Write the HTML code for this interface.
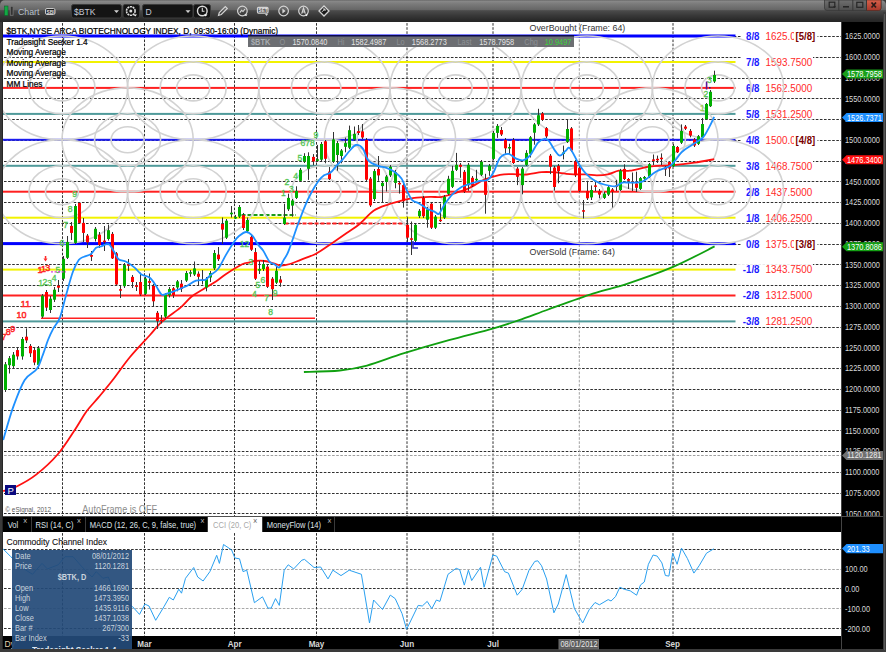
<!DOCTYPE html>
<html><head><meta charset="utf-8"><title>Chart</title>
<style>
html,body{margin:0;padding:0;}
body{width:886px;height:652px;overflow:hidden;position:relative;background:#3a3a3a;font-family:"Liberation Sans", sans-serif;}
.abs{position:absolute;}
#tb{left:0;top:0;width:886px;height:22px;background:linear-gradient(#6a6a6a 0px,#878787 1.5px,#7a7a7a 4px,#656565 10px,#4b4b4b 10.6px,#3a3a3a 15px,#2b2b2b 19.5px,#262626 22px);border-radius:5px 5px 0 0;}
svg{position:absolute;left:0;top:0;}
.tab{position:absolute;top:517.8px;height:15px;font-size:7.6px;line-height:15px;color:#d8dde2;white-space:nowrap;transform:scaleY(1.15);transform-origin:0 50%;}
.dw{position:absolute;left:12px;top:550px;width:120px;height:99px;background:rgba(36,74,120,0.93);overflow:hidden;}
.dw div{position:absolute;font-size:7.4px;color:#c9d3dd;white-space:nowrap;line-height:10px;transform:scaleY(1.15);}
</style></head><body>
<div id="tb" class="abs"></div>

<svg width="886" height="652" viewBox="0 0 886 652" font-family='"Liberation Sans", sans-serif'>
<rect x="3" y="22" width="838" height="494" fill="#ffffff"/>
<rect x="841" y="22" width="42" height="494" fill="#000000"/>
<rect x="3" y="516" width="880" height="16" fill="#000000"/>
<rect x="3" y="532" width="838" height="104" fill="#ffffff"/>
<rect x="841" y="532" width="42" height="104" fill="#000000"/>
<rect x="3" y="636" width="880" height="13" fill="#000000"/>
<rect x="2" y="22" width="1" height="627" fill="#262626"/>
<rect x="841" y="22" width="1" height="627" fill="#444"/>
<defs><clipPath id="cm"><rect x="3" y="22" width="838" height="494"/></clipPath><clipPath id="cc"><rect x="3" y="532" width="838" height="104"/></clipPath></defs>
<g clip-path="url(#cm)">
<path d="M3 36.5 H841 M3 57.5 H841 M3 78.5 H841 M3 98.5 H841 M3 119.5 H841 M3 140.5 H841 M3 161.5 H841 M3 181.5 H841 M3 202.5 H841 M3 223.5 H841 M3 244.5 H841 M3 264.5 H841 M3 285.5 H841 M3 306.5 H841 M3 327.5 H841 M3 347.5 H841 M3 368.5 H841 M3 389.5 H841 M3 410.5 H841 M3 430.5 H841 M3 451.5 H841 M3 472.5 H841 M3 493.5 H841 M3 513.5 H841" stroke="#303030" stroke-width="1" stroke-dasharray="2.6 1.5" stroke-dashoffset="3.1" fill="none"/>
<path d="M62.5 22 V516 M144.5 22 V516 M234.5 22 V516 M316.5 22 V516 M407 22 V516 M493 22 V516 M673 22 V516" stroke="#303030" stroke-width="1" stroke-dasharray="2.6 1.5" stroke-dashoffset="3.0" fill="none"/>
<path d="M579.3 22 V516 M3 455.5 H841" stroke="#a0a0a0" stroke-width="1" stroke-dasharray="2.6 1.5" stroke-dashoffset="3.0" fill="none"/>
<rect x="3" y="34.5" width="732.5" height="3" fill="#0000ff"/>
<rect x="3" y="61" width="732.5" height="2" fill="#f2f200"/>
<rect x="3" y="86.9" width="732.5" height="2" fill="#ff2020"/>
<rect x="3" y="112.9" width="732.5" height="2" fill="#4f9a9a"/>
<rect x="3" y="138.8" width="732.5" height="2" fill="#1c1cf0"/>
<rect x="3" y="164.8" width="732.5" height="2" fill="#4f9a9a"/>
<rect x="3" y="190.7" width="732.5" height="2" fill="#ff2020"/>
<rect x="3" y="216.7" width="732.5" height="2" fill="#f2f200"/>
<rect x="3" y="242.1" width="732.5" height="3" fill="#0000ff"/>
<rect x="3" y="268.6" width="732.5" height="2" fill="#f2f200"/>
<rect x="3" y="294.5" width="732.5" height="2" fill="#ff2020"/>
<rect x="3" y="320.4" width="732.5" height="2" fill="#4f9a9a"/>
<rect x="41" y="317.5" width="274" height="1.5" fill="#ff2020"/>
<path d="M241.5 215 H296" stroke="#1a9a1a" stroke-width="2" stroke-dasharray="4 2"/>
<path d="M284.5 223.5 H405" stroke="#ff2020" stroke-width="2" stroke-dasharray="4 2"/>
<rect x="741" y="30.5" width="72" height="11" fill="#fff"/>
<text transform="matrix(1 0 0 1.12 759.5 39.9)" font-size="9.7" fill="#1a1aff" text-anchor="end" font-weight="bold">8/8</text>
<text transform="matrix(1 0 0 1.1 765.5 39.9)" font-size="9.9" fill="#ff2a2a">1625.0</text>
<rect x="794" y="30.5" width="23.5" height="11" fill="#fff"/>
<text transform="matrix(1 0 0 1.12 795.5 39.9)" font-size="9.6" fill="#7a0000" font-weight="bold">[5/8]</text>
<rect x="741" y="56.5" width="72" height="11" fill="#fff"/>
<text transform="matrix(1 0 0 1.12 759.5 65.9)" font-size="9.7" fill="#1a1aff" text-anchor="end" font-weight="bold">7/8</text>
<text transform="matrix(1 0 0 1.1 765.5 65.9)" font-size="9.9" fill="#ff2a2a">1593.7500</text>
<rect x="741" y="82.4" width="72" height="11" fill="#fff"/>
<text transform="matrix(1 0 0 1.12 759.5 91.8)" font-size="9.7" fill="#1a1aff" text-anchor="end" font-weight="bold">6/8</text>
<text transform="matrix(1 0 0 1.1 765.5 91.8)" font-size="9.9" fill="#ff2a2a">1562.5000</text>
<rect x="741" y="108.4" width="72" height="11" fill="#fff"/>
<text transform="matrix(1 0 0 1.12 759.5 117.8)" font-size="9.7" fill="#1a1aff" text-anchor="end" font-weight="bold">5/8</text>
<text transform="matrix(1 0 0 1.1 765.5 117.8)" font-size="9.9" fill="#ff2a2a">1531.2500</text>
<rect x="741" y="134.3" width="72" height="11" fill="#fff"/>
<text transform="matrix(1 0 0 1.12 759.5 143.7)" font-size="9.7" fill="#1a1aff" text-anchor="end" font-weight="bold">4/8</text>
<text transform="matrix(1 0 0 1.1 765.5 143.7)" font-size="9.9" fill="#ff2a2a">1500.0</text>
<rect x="794" y="134.3" width="23.5" height="11" fill="#fff"/>
<text transform="matrix(1 0 0 1.12 795.5 143.7)" font-size="9.6" fill="#7a0000" font-weight="bold">[4/8]</text>
<rect x="741" y="160.2" width="72" height="11" fill="#fff"/>
<text transform="matrix(1 0 0 1.12 759.5 169.7)" font-size="9.7" fill="#1a1aff" text-anchor="end" font-weight="bold">3/8</text>
<text transform="matrix(1 0 0 1.1 765.5 169.7)" font-size="9.9" fill="#ff2a2a">1468.7500</text>
<rect x="741" y="186.2" width="72" height="11" fill="#fff"/>
<text transform="matrix(1 0 0 1.12 759.5 195.6)" font-size="9.7" fill="#1a1aff" text-anchor="end" font-weight="bold">2/8</text>
<text transform="matrix(1 0 0 1.1 765.5 195.6)" font-size="9.9" fill="#ff2a2a">1437.5000</text>
<rect x="741" y="212.2" width="72" height="11" fill="#fff"/>
<text transform="matrix(1 0 0 1.12 759.5 221.6)" font-size="9.7" fill="#1a1aff" text-anchor="end" font-weight="bold">1/8</text>
<text transform="matrix(1 0 0 1.1 765.5 221.6)" font-size="9.9" fill="#ff2a2a">1406.2500</text>
<rect x="741" y="238.1" width="72" height="11" fill="#fff"/>
<text transform="matrix(1 0 0 1.12 759.5 247.5)" font-size="9.7" fill="#1a1aff" text-anchor="end" font-weight="bold">0/8</text>
<text transform="matrix(1 0 0 1.1 765.5 247.5)" font-size="9.9" fill="#ff2a2a">1375.0</text>
<rect x="794" y="238.1" width="23.5" height="11" fill="#fff"/>
<text transform="matrix(1 0 0 1.12 795.5 247.5)" font-size="9.6" fill="#7a0000" font-weight="bold">[3/8]</text>
<rect x="737" y="264.1" width="76" height="11" fill="#fff"/>
<text transform="matrix(1 0 0 1.12 759.5 273.4)" font-size="9.7" fill="#1a1aff" text-anchor="end" font-weight="bold">-1/8</text>
<text transform="matrix(1 0 0 1.1 765.5 273.4)" font-size="9.9" fill="#ff2a2a">1343.7500</text>
<rect x="737" y="290" width="76" height="11" fill="#fff"/>
<text transform="matrix(1 0 0 1.12 759.5 299.4)" font-size="9.7" fill="#1a1aff" text-anchor="end" font-weight="bold">-2/8</text>
<text transform="matrix(1 0 0 1.1 765.5 299.4)" font-size="9.9" fill="#ff2a2a">1312.5000</text>
<rect x="737" y="315.9" width="76" height="11" fill="#fff"/>
<text transform="matrix(1 0 0 1.12 759.5 325.3)" font-size="9.7" fill="#1a1aff" text-anchor="end" font-weight="bold">-3/8</text>
<text transform="matrix(1 0 0 1.1 765.5 325.3)" font-size="9.9" fill="#ff2a2a">1281.2500</text>
<g fill="none" stroke="#d2d2d2" stroke-width="1.6"><ellipse cx="-69.2" cy="87.9" rx="16.5" ry="13"/><ellipse cx="-69.2" cy="87.9" rx="33" ry="26"/><ellipse cx="-69.2" cy="87.9" rx="65.6" ry="51.9"/><ellipse cx="-69.2" cy="191.7" rx="16.5" ry="13"/><ellipse cx="-69.2" cy="191.7" rx="33" ry="26"/><ellipse cx="-69.2" cy="191.7" rx="65.6" ry="51.9"/><ellipse cx="62" cy="87.9" rx="16.5" ry="13"/><ellipse cx="62" cy="87.9" rx="33" ry="26"/><ellipse cx="62" cy="87.9" rx="65.6" ry="51.9"/><ellipse cx="62" cy="191.7" rx="16.5" ry="13"/><ellipse cx="62" cy="191.7" rx="33" ry="26"/><ellipse cx="62" cy="191.7" rx="65.6" ry="51.9"/><ellipse cx="127.6" cy="139.8" rx="16.5" ry="13"/><ellipse cx="127.6" cy="139.8" rx="33" ry="26"/><ellipse cx="127.6" cy="139.8" rx="65.6" ry="51.9"/><ellipse cx="193.2" cy="87.9" rx="16.5" ry="13"/><ellipse cx="193.2" cy="87.9" rx="33" ry="26"/><ellipse cx="193.2" cy="87.9" rx="65.6" ry="51.9"/><ellipse cx="193.2" cy="191.7" rx="16.5" ry="13"/><ellipse cx="193.2" cy="191.7" rx="33" ry="26"/><ellipse cx="193.2" cy="191.7" rx="65.6" ry="51.9"/><ellipse cx="390" cy="139.8" rx="16.5" ry="13"/><ellipse cx="390" cy="139.8" rx="33" ry="26"/><ellipse cx="390" cy="139.8" rx="65.6" ry="51.9"/><ellipse cx="324.4" cy="87.9" rx="16.5" ry="13"/><ellipse cx="324.4" cy="87.9" rx="33" ry="26"/><ellipse cx="324.4" cy="87.9" rx="65.6" ry="51.9"/><ellipse cx="324.4" cy="191.7" rx="16.5" ry="13"/><ellipse cx="324.4" cy="191.7" rx="33" ry="26"/><ellipse cx="324.4" cy="191.7" rx="65.6" ry="51.9"/><ellipse cx="652.4" cy="139.8" rx="16.5" ry="13"/><ellipse cx="652.4" cy="139.8" rx="33" ry="26"/><ellipse cx="652.4" cy="139.8" rx="65.6" ry="51.9"/><ellipse cx="455.6" cy="87.9" rx="16.5" ry="13"/><ellipse cx="455.6" cy="87.9" rx="33" ry="26"/><ellipse cx="455.6" cy="87.9" rx="65.6" ry="51.9"/><ellipse cx="455.6" cy="191.7" rx="16.5" ry="13"/><ellipse cx="455.6" cy="191.7" rx="33" ry="26"/><ellipse cx="455.6" cy="191.7" rx="65.6" ry="51.9"/><ellipse cx="586.8" cy="87.9" rx="16.5" ry="13"/><ellipse cx="586.8" cy="87.9" rx="33" ry="26"/><ellipse cx="586.8" cy="87.9" rx="65.6" ry="51.9"/><ellipse cx="586.8" cy="191.7" rx="16.5" ry="13"/><ellipse cx="586.8" cy="191.7" rx="33" ry="26"/><ellipse cx="586.8" cy="191.7" rx="65.6" ry="51.9"/><ellipse cx="718" cy="87.9" rx="16.5" ry="13"/><ellipse cx="718" cy="87.9" rx="33" ry="26"/><ellipse cx="718" cy="87.9" rx="65.6" ry="51.9"/><ellipse cx="718" cy="191.7" rx="16.5" ry="13"/><ellipse cx="718" cy="191.7" rx="33" ry="26"/><ellipse cx="718" cy="191.7" rx="65.6" ry="51.9"/></g>
<path d="M303.9 372 C309.9 371.8 329.2 371.6 339.7 370.5 C350.2 369.4 356.2 368.5 367 365.6 C377.8 362.7 390.6 357.4 404.2 353.2 C417.8 349 434 344.3 448.9 340.2 C463.8 336.1 482 331.6 493.6 328.3 C505.2 325 509.3 323.5 518.4 320.4 C527.5 317.3 535.8 314 548.2 309.5 C560.6 305 579.6 297.9 592.9 293.6 C606.1 289.3 614.5 288 627.7 283.6 C641 279.2 657.9 273.4 672.4 267.2 C686.9 261 707.6 249.9 714.6 246.4" fill="none" stroke="#10a010" stroke-width="1.8"/>
<path d="M3.2 491.2 C5.5 490.4 11.6 489 17.2 486.2 C22.8 483.4 29.7 479.8 36.5 474.4 C43.3 469 51.6 461.5 58 454 C64.4 446.5 70.4 436.4 75.1 429.4 C79.8 422.4 82 417.6 85.9 412.2 C89.8 406.8 94.2 402.6 98.7 397.2 C103.2 391.8 107.5 386.7 112.7 380 C117.9 373.3 123.8 364.5 130 357 C136.2 349.5 145.1 340.4 150 335 C154.9 329.6 156.1 327.4 159.2 324.3 C162.3 321.2 164.8 319.4 168.4 316.6 C172 313.8 176.9 310.7 180.7 307.4 C184.5 304.1 187.6 299.8 191.4 296.7 C195.2 293.6 199.5 291.6 203.6 289 C207.7 286.4 212.2 283.9 215.9 281.4 C219.7 278.9 221.7 276.8 226.1 273.9 C230.5 271 238.4 266.1 242.2 264.2 C245.9 262.3 246.5 263.1 248.6 262.6 C250.7 262.1 252.3 261.3 255 261 C257.7 260.7 261.4 260.6 264.7 261 C268 261.4 271.9 262.9 274.6 263.6 C277.3 264.4 278.1 265.4 280.7 265.5 C283.3 265.6 286.7 264.9 290 264 C293.3 263.1 296.4 261.5 300.7 259.8 C305 258.1 310.9 256.4 316 253.7 C321.1 251 326.2 247.1 331.3 243.7 C336.4 240.2 342.1 236.2 346.7 233 C351.3 229.8 354.5 228.2 359 224.5 C363.5 220.8 368.7 214.2 373.6 210.8 C378.5 207.5 383.6 206.2 388.6 204.4 C393.6 202.6 399.3 201.2 403.6 200.1 C407.9 199 409.9 198.4 414.3 197.9 C418.7 197.4 425.4 197.1 430 196.9 C434.6 196.7 437.7 197.5 442 196.8 C446.3 196.1 451.2 194.3 455.9 192.8 C460.5 191.3 465.2 190 469.9 187.8 C474.5 185.6 478.8 182 483.8 179.8 C488.8 177.6 495.3 175.8 500 174.8 C504.7 173.9 507.5 174.2 512 174.1 C516.5 174 521.9 174.8 526.8 174.5 C531.7 174.2 537.2 172.6 541.5 172.2 C545.8 171.8 547.8 171.9 552.5 172.2 C557.2 172.5 564.5 173.7 570 174.1 C575.5 174.5 581.2 174.2 585.7 174.4 C590.2 174.6 593.1 175.3 596.8 175.3 C600.5 175.3 604.1 175.2 607.8 174.4 C611.5 173.6 615.2 171.3 618.9 170.7 C622.6 170.1 624.5 171.4 629.9 170.7 C635.3 170 644.3 167.2 651.5 166.3 C658.7 165.4 665.9 165.8 673 165.2 C680.1 164.6 687.5 163.7 694.4 162.7 C701.3 161.7 710.9 159.8 714.2 159.2" fill="none" stroke="#ff1010" stroke-width="1.8"/>
<path d="M5.5 362 V392 M9.5 356 V373.5 M13.5 352 V369 M17.5 348 V359.7 M22.5 337 V359.7 M26.5 328.4 V343 M30.5 344 V357 M34.5 348 V365.2 M38.5 346 V369 M42.5 294 V318 M46.5 290 V311 M50.5 296 V313 M54.5 287 V302 M58.5 280 V292 M63.5 256 V281 M67.5 236 V259 M71.5 222 V240 M75.5 204 V244 M79.5 202 V224 M83.5 218 V242 M87.5 234 V248 M91.5 251 V261 M95.5 227 V241.5 M99.5 232 V248 M104.5 226 V251 M108.5 224.6 V240.6 M112.5 232 V259 M116.5 252 V286 M120.5 286 V298 M124.5 263 V288 M128.5 259 V271 M132.5 275 V288 M136.5 282 V291 M140.5 272.7 V296 M145.5 277 V295 M149.5 273.5 V289.6 M153.5 284 V306 M157.5 311 V329 M161.5 315 V323.5 M165.5 293 V318 M169.5 287 V297.5 M173.5 287 V298 M177.5 280 V291.3 M181.5 280 V292 M186.5 271 V282 M190.5 270 V276.8 M194.5 261.5 V276 M198.5 271.4 V285.2 M202.5 270 V284.4 M206.5 277 V291.3 M210.5 271 V282 M214.5 250 V270 M218.5 247 V261 M222.5 217.5 V244 M226.5 219 V239 M231.5 206 V217.5 M235.5 215 V219 M239.5 205 V218 M243.5 213 V230 M247.5 217.5 V233 M251.5 235 V251 M255.5 248 V280 M259.5 261 V274 M263.5 260 V271 M267.5 265 V288 M272.5 277 V300 M276.5 266 V284 M280.5 276 V286.8 M284.5 203.8 V225 M288.5 193.7 V211 M292.5 199 V216.7 M296.5 186.3 V199 M300.5 168 V182 M304.5 153.2 V163 M308.5 152.3 V179.9 M313.5 154.1 V165.2 M317.5 144.9 V162 M321.5 142 V161 M325.5 140 V163.3 M329.5 167 V180 M333.5 132 V163 M337.5 141 V170.7 M341.5 149 V163.3 M345.5 137.6 V152.3 M349.5 125.6 V149 M354.5 126.5 V141 M358.5 125 V135 M362.5 124 V139 M366.5 138 V181 M370.5 177 V207 M374.5 169 V201 M378.5 156 V180.8 M382.5 181 V202.2 M386.5 175 V191.5 M390.5 165 V177 M395.5 170 V188.3 M399.5 181 V193.6 M403.5 183 V207.6 M407.5 217.2 V241.9 M411.5 221.5 V255 M415.5 223 V242 M419.5 209 V218 M423.5 196 V218 M427.5 207 V227.7 M431.5 202 V229 M435.5 215 V229 M440.5 203.7 V222 M444.5 195 V219 M448.5 175.8 V195 M452.5 165.8 V188 M456.5 152.9 V171 M460.5 163 V177.8 M464.5 170 V193 M468.5 163 V190.8 M472.5 176 V187 M476.5 169.8 V181 M481.5 160 V176 M485.5 173.8 V213.7 M489.5 164 V175.8 M493.5 131 V160 M497.5 124 V137.9 M501.5 127 V136 M505.5 138 V153.8 M509.5 143.7 V153.8 M513.5 138 V164 M517.5 167 V185.1 M522.5 167 V194.3 M526.5 150.2 V166 M530.5 136 V157.5 M534.5 123 V144.7 M538.5 108.8 V126 M542.5 112 V121 M546.5 127 V138 M550.5 154 V174.1 M554.5 166 V190.6 M558.5 164 V183.3 M563.5 145.6 V159.4 M567.5 119 V143 M571.5 127 V152 M575.5 160 V177 M579.5 166 V192 M583.5 200 V218.5 M587.5 180.8 V200 M591.5 185.4 V200 M595.5 181.7 V191 M599.5 189 V198.3 M604.5 192 V199 M608.5 185.4 V196 M612.5 188 V207.5 M616.5 179.9 V191 M620.5 168.9 V191 M624.5 164.3 V180 M628.5 178 V189 M632.5 172.5 V191 M636.5 171.7 V192 M640.5 177 V190 M644.5 176 V180 M649.5 163 V178 M653.5 154.5 V165 M657.5 155.6 V163 M661.5 153.4 V165 M665.5 166 V176 M669.5 161 V177 M673.5 144 V167 M677.5 146 V153 M681.5 124.4 V144 M685.5 125 V130 M690.5 129 V137.3 M694.5 138 V147 M698.5 135 V145 M702.5 118 V138 M706.5 103 V120 M710.5 90 V107 M714.5 70.7 V83" stroke="#333" stroke-width="1" fill="none"/>
<g fill="#00b000"><rect x="4" y="364.3" width="3" height="25.7"/><rect x="8" y="358.2" width="3" height="7"/><rect x="12" y="354.7" width="3" height="11.4"/><rect x="21" y="339" width="3" height="17.4"/><rect x="37" y="348.3" width="3" height="16.6"/><rect x="41" y="295.7" width="3" height="20.9"/><rect x="49" y="298.7" width="3" height="11.3"/><rect x="53" y="289.7" width="3" height="10"/><rect x="62" y="258.8" width="3" height="19.9"/><rect x="66" y="241.9" width="3" height="15.9"/><rect x="74" y="206" width="3" height="36.9"/><rect x="94" y="228.8" width="3" height="10.2"/><rect x="107" y="230.2" width="3" height="8.8"/><rect x="123" y="265.1" width="3" height="21.1"/><rect x="144" y="278.6" width="3" height="15.2"/><rect x="164" y="294.4" width="3" height="22.2"/><rect x="168" y="289" width="3" height="6.2"/><rect x="176" y="281.4" width="3" height="6.1"/><rect x="185" y="273" width="3" height="7.6"/><rect x="189" y="272.2" width="3" height="1.5"/><rect x="193" y="268.4" width="3" height="6.1"/><rect x="205" y="279.1" width="3" height="8.4"/><rect x="209" y="273" width="3" height="4.5"/><rect x="213" y="253" width="3" height="15.4"/><rect x="225" y="220.7" width="3" height="17"/><rect x="230" y="212.7" width="3" height="1.6"/><rect x="234" y="217" width="3" height="1.5"/><rect x="238" y="207" width="3" height="9.7"/><rect x="246" y="220" width="3" height="11.2"/><rect x="258" y="269" width="3" height="1.7"/><rect x="262" y="264.2" width="3" height="4.8"/><rect x="275" y="270.7" width="3" height="12"/><rect x="283" y="217.6" width="3" height="6.4"/><rect x="287" y="197.9" width="3" height="11.4"/><rect x="291" y="200.5" width="3" height="5.1"/><rect x="295" y="190.9" width="3" height="7"/><rect x="299" y="169.8" width="3" height="11"/><rect x="303" y="156" width="3" height="5.5"/><rect x="307" y="156" width="3" height="12.8"/><rect x="316" y="159.3" width="3" height="1.5"/><rect x="320" y="144" width="3" height="15.7"/><rect x="332" y="139.4" width="3" height="22.1"/><rect x="336" y="143.1" width="3" height="11.9"/><rect x="340" y="150.5" width="3" height="5.5"/><rect x="344" y="143.1" width="3" height="3.7"/><rect x="348" y="130.2" width="3" height="17.5"/><rect x="353" y="133.9" width="3" height="5.5"/><rect x="373" y="171.1" width="3" height="27.9"/><rect x="381" y="182.9" width="3" height="3.2"/><rect x="385" y="176.5" width="3" height="5.4"/><rect x="389" y="166.8" width="3" height="8.6"/><rect x="394" y="172.2" width="3" height="10.7"/><rect x="414" y="224.8" width="3" height="16"/><rect x="418" y="210.8" width="3" height="5.4"/><rect x="426" y="209.3" width="3" height="10.4"/><rect x="434" y="216.7" width="3" height="11"/><rect x="443" y="196.8" width="3" height="20.9"/><rect x="447" y="178.8" width="3" height="15"/><rect x="451" y="170.8" width="3" height="16"/><rect x="455" y="164.8" width="3" height="5"/><rect x="467" y="164.8" width="3" height="20"/><rect x="475" y="178.8" width="3" height="1.5"/><rect x="480" y="161.8" width="3" height="13"/><rect x="488" y="165.8" width="3" height="5"/><rect x="492" y="132.9" width="3" height="26"/><rect x="496" y="125.9" width="3" height="7"/><rect x="508" y="147" width="3" height="1.5"/><rect x="521" y="168.6" width="3" height="16.5"/><rect x="525" y="152.9" width="3" height="12"/><rect x="529" y="137.3" width="3" height="16.5"/><rect x="533" y="124.4" width="3" height="8.3"/><rect x="537" y="115.2" width="3" height="9.2"/><rect x="562" y="152.4" width="3" height="1.5"/><rect x="566" y="129" width="3" height="12.9"/><rect x="590" y="190" width="3" height="7.4"/><rect x="603" y="193.7" width="3" height="4.2"/><rect x="607" y="187.2" width="3" height="7.4"/><rect x="619" y="170.7" width="3" height="19.3"/><rect x="639" y="178.1" width="3" height="10.8"/><rect x="643" y="177" width="3" height="1.6"/><rect x="648" y="164.2" width="3" height="12.8"/><rect x="672" y="145.9" width="3" height="20.4"/><rect x="680" y="130.9" width="3" height="11.8"/><rect x="697" y="136.2" width="3" height="7.6"/><rect x="701" y="124" width="3" height="13.3"/><rect x="705" y="104" width="3" height="15.1"/><rect x="709" y="91.8" width="3" height="14.4"/><rect x="713" y="75" width="3" height="6.5"/></g>
<g fill="#ff0000"><rect x="16" y="350.1" width="3" height="6.3"/><rect x="25" y="336.7" width="3" height="3.7"/><rect x="29" y="345.9" width="3" height="7.4"/><rect x="33" y="350.1" width="3" height="12.4"/><rect x="45" y="292" width="3" height="15.6"/><rect x="57" y="285.7" width="3" height="2"/><rect x="70" y="225.9" width="3" height="7"/><rect x="78" y="203" width="3" height="19.9"/><rect x="82" y="222.9" width="3" height="10"/><rect x="86" y="235.6" width="3" height="6.7"/><rect x="90" y="255" width="3" height="1.7"/><rect x="98" y="234.7" width="3" height="10.2"/><rect x="103" y="240.6" width="3" height="1.5"/><rect x="111" y="233.9" width="3" height="24.5"/><rect x="115" y="253.3" width="3" height="31.2"/><rect x="119" y="289.2" width="3" height="1.5"/><rect x="127" y="264.3" width="3" height="1.5"/><rect x="131" y="276.9" width="3" height="5.1"/><rect x="135" y="285.4" width="3" height="1.5"/><rect x="139" y="282" width="3" height="12.6"/><rect x="148" y="281.1" width="3" height="1.7"/><rect x="152" y="286" width="3" height="15.3"/><rect x="156" y="312.8" width="3" height="8.4"/><rect x="160" y="319.7" width="3" height="1.5"/><rect x="172" y="288.3" width="3" height="6.9"/><rect x="180" y="283.7" width="3" height="5.3"/><rect x="197" y="273.7" width="3" height="3.1"/><rect x="201" y="279.5" width="3" height="1.5"/><rect x="217" y="254.6" width="3" height="4.6"/><rect x="221" y="224" width="3" height="5.6"/><rect x="242" y="215.1" width="3" height="12.9"/><rect x="250" y="236.9" width="3" height="12.8"/><rect x="254" y="252.1" width="3" height="26.6"/><rect x="266" y="266.6" width="3" height="20.2"/><rect x="271" y="278.7" width="3" height="10.5"/><rect x="279" y="279.5" width="3" height="3.2"/><rect x="312" y="156.9" width="3" height="4.6"/><rect x="324" y="141.3" width="3" height="17.5"/><rect x="328" y="171.6" width="3" height="7.4"/><rect x="357" y="131.1" width="3" height="1.9"/><rect x="361" y="131.4" width="3" height="6.1"/><rect x="365" y="140" width="3" height="39.7"/><rect x="369" y="178.6" width="3" height="26.8"/><rect x="377" y="169" width="3" height="6.4"/><rect x="398" y="182.9" width="3" height="1.5"/><rect x="402" y="185.1" width="3" height="16.1"/><rect x="406" y="224.8" width="3" height="12.8"/><rect x="410" y="238.3" width="3" height="1.5"/><rect x="422" y="198" width="3" height="18.2"/><rect x="430" y="203.7" width="3" height="24"/><rect x="439" y="219.7" width="3" height="1.5"/><rect x="459" y="164.8" width="3" height="2"/><rect x="463" y="171.8" width="3" height="20"/><rect x="471" y="177.8" width="3" height="8"/><rect x="484" y="178.8" width="3" height="16"/><rect x="500" y="130" width="3" height="4.5"/><rect x="504" y="140" width="3" height="8.3"/><rect x="512" y="140" width="3" height="23"/><rect x="516" y="168.6" width="3" height="8.2"/><rect x="541" y="113.4" width="3" height="6.4"/><rect x="545" y="128.1" width="3" height="8.3"/><rect x="549" y="155.7" width="3" height="11"/><rect x="553" y="167.6" width="3" height="19.4"/><rect x="557" y="165.8" width="3" height="5.5"/><rect x="570" y="128.4" width="3" height="22.1"/><rect x="574" y="161.5" width="3" height="13.8"/><rect x="578" y="167.9" width="3" height="23"/><rect x="582" y="210.2" width="3" height="1.5"/><rect x="586" y="190.9" width="3" height="7.4"/><rect x="594" y="185.4" width="3" height="1.5"/><rect x="598" y="190.9" width="3" height="3.7"/><rect x="611" y="189.4" width="3" height="2.4"/><rect x="615" y="185.4" width="3" height="1.5"/><rect x="623" y="168.9" width="3" height="10.1"/><rect x="627" y="179" width="3" height="1.8"/><rect x="631" y="181.7" width="3" height="1.5"/><rect x="635" y="183.5" width="3" height="4.3"/><rect x="652" y="159.4" width="3" height="1.5"/><rect x="656" y="158.8" width="3" height="1.5"/><rect x="660" y="157.7" width="3" height="1.5"/><rect x="664" y="167.4" width="3" height="2.1"/><rect x="668" y="162" width="3" height="6.5"/><rect x="676" y="147" width="3" height="5.3"/><rect x="684" y="126.6" width="3" height="2.1"/><rect x="689" y="130.9" width="3" height="4.7"/><rect x="693" y="139.5" width="3" height="6"/></g>
<path d="M3.2 440.1 C4.8 434.7 9.3 417.9 12.9 407.9 C16.5 397.9 20.7 386.5 24.7 380 C28.7 373.5 33.8 373 36.8 369 C39.8 365 40.5 360.8 42.4 356 C44.3 351.2 46.2 344.6 48 340 C49.8 335.4 51.4 332.1 53.4 328.4 C55.4 324.7 57.8 323.1 59.9 317.6 C62 312.2 63.7 303.3 65.9 295.7 C68.1 288.1 70.7 277.8 72.9 271.8 C75.1 265.8 77.1 262.3 78.9 259.8 C80.8 257.3 82 257.6 84 256.7 C86 255.8 88.8 255.6 90.8 254.1 C92.8 252.6 94.3 249.1 96 247.8 C97.7 246.5 98.8 247.1 100.9 246.5 C103 245.9 106.4 243.3 108.5 244 C110.6 244.7 111.8 248.3 113.5 250.8 C115.2 253.3 116.5 257.4 118.6 259.2 C120.7 261 123.5 260.3 126.2 261.7 C128.9 263.1 132.1 265.5 134.6 267.6 C137.1 269.7 138.9 272.7 141.4 274.4 C143.9 276.1 147.4 275.9 149.8 277.8 C152.2 279.7 154.2 283.2 156.1 286 C158 288.8 159.7 293.1 161.5 294.4 C163.3 295.7 164.2 294.4 166.9 293.6 C169.6 292.8 174.3 291.1 177.6 289.8 C180.9 288.5 183.7 287.5 186.8 286 C189.9 284.5 192.9 281.6 196 280.6 C199.1 279.6 202.9 280.7 205.2 279.8 C207.5 278.9 207.9 277.3 210 275.5 C212.1 273.7 215.3 272.5 218 269 C220.7 265.5 223.4 259.1 226.1 254.6 C228.8 250 231.9 244.8 234.1 241.7 C236.2 238.6 237 237.6 239 236 C241 234.4 244 232.1 246.2 232 C248.3 231.9 249.9 233 251.9 235.2 C253.9 237.3 256.4 242.3 258.3 244.9 C260.2 247.5 261.2 247.7 263.1 250.5 C265 253.3 267.7 259.5 269.6 261.8 C271.5 264.1 272.8 263.3 274.4 264.2 C276 265.1 277.6 268.2 279.2 267.4 C280.8 266.6 282.5 262.1 284 259.4 C285.5 256.7 286.1 257 288.4 251.3 C290.7 245.6 294.8 233 297.6 225.3 C300.4 217.6 303 210.7 305.3 205.3 C307.6 199.9 309.1 196.9 311.3 192.8 C313.5 188.7 316.5 183.7 318.6 180.8 C320.7 177.9 322.1 176.7 324.1 175.3 C326.1 173.9 328.5 174.2 330.6 172.5 C332.8 170.8 335 167.3 337 165.2 C339 163.1 340.4 162.1 342.5 159.7 C344.6 157.2 347.6 152.9 349.9 150.5 C352.1 148.1 353.8 145.3 356 145 C358.2 144.7 360.9 146 362.9 148.6 C364.9 151.2 365.7 157.5 368.2 160.4 C370.7 163.3 374.8 164.6 377.9 165.8 C380.9 167.1 383.6 166.8 386.5 167.9 C389.4 169 392.5 170.4 395 172.2 C397.5 174 399.5 175.6 401.5 178.6 C403.5 181.6 405 186.8 406.8 190.4 C408.6 194 410.2 197.9 412.2 200.1 C414.2 202.2 416.1 201.9 418.6 203.3 C421.1 204.7 424.5 207.2 427.2 208.7 C429.9 210.1 433 211.2 435 212 C437 212.8 437.3 215.1 439 213.7 C440.7 212.3 442.7 207 445 203.7 C447.3 200.4 450.1 196.6 452.9 193.8 C455.7 191 459.1 188.5 461.9 186.8 C464.7 185.1 466.9 184.8 469.9 183.8 C472.9 182.8 476.9 181.5 479.9 180.8 C482.9 180.1 485.5 181.3 487.8 179.8 C490.1 178.3 491.8 175.5 493.8 171.8 C495.8 168.2 497.6 160.9 500 157.9 C502.4 154.9 505.8 153.7 508.4 153.8 C511 153.9 513.2 157.3 515.7 158.4 C518.2 159.5 520.6 160.9 523.1 160.3 C525.6 159.7 528 157.7 530.5 154.8 C533 151.9 535.5 145.5 537.8 142.8 C540.1 140.1 542.4 139.1 544.3 138.8 C546.1 138.5 547.1 138.9 548.9 141 C550.7 143.1 553.5 148.7 555.3 151.1 C557.1 153.5 558.2 155.7 559.9 155.7 C561.6 155.7 563.7 152.3 565.4 151.1 C567.1 149.9 567.8 146.3 570 148.3 C572.2 150.3 575.8 159.1 578.4 163.3 C581 167.5 583 170.5 585.7 173.4 C588.5 176.3 591.8 179 594.9 180.8 C598 182.7 600.7 183.6 604.1 184.5 C607.5 185.4 612.1 186.6 615.2 186.3 C618.3 186 620 183.2 622.5 182.6 C625 182 626.5 182.8 629.9 182.6 C633.3 182.4 638.6 183.1 642.9 181.3 C647.2 179.5 651.1 174.4 655.8 171.7 C660.4 169 666.5 168.4 670.8 165.2 C675.1 162 677.9 155.7 681.5 152.3 C685.1 148.9 688.7 147.3 692.3 144.8 C695.9 142.3 700.1 140.3 703 137.3 C705.9 134.3 707.6 130 709.5 126.6 C711.4 123.2 713.4 118.5 714.2 116.9" fill="none" stroke="#1e90ff" stroke-width="1.8"/>
<text transform="matrix(1 0 0 1.1 74.7 196.7)" font-size="8.6" fill="#52c652" text-anchor="middle" stroke="#52c652" stroke-width="0.3">9</text>
<text transform="matrix(1 0 0 1.1 70.1 211.9)" font-size="8.6" fill="#52c652" text-anchor="middle" stroke="#52c652" stroke-width="0.3">8</text>
<text transform="matrix(1 0 0 1.1 65.7 228.4)" font-size="8.6" fill="#52c652" text-anchor="middle" stroke="#52c652" stroke-width="0.3">7</text>
<text transform="matrix(1 0 0 1.1 62 245.6)" font-size="8.6" fill="#52c652" text-anchor="middle" stroke="#52c652" stroke-width="0.3">6</text>
<text transform="matrix(1 0 0 1.1 57.8 272.6)" font-size="8.6" fill="#52c652" text-anchor="middle" stroke="#52c652" stroke-width="0.3">5</text>
<text transform="matrix(1 0 0 1.1 40.7 286.1)" font-size="8.6" fill="#52c652" text-anchor="middle" stroke="#52c652" stroke-width="0.3">1</text>
<text transform="matrix(1 0 0 1.1 44.8 285.3)" font-size="8.6" fill="#52c652" text-anchor="middle" stroke="#52c652" stroke-width="0.3">2</text>
<text transform="matrix(1 0 0 1.1 49.7 285.9)" font-size="8.6" fill="#52c652" text-anchor="middle" stroke="#52c652" stroke-width="0.3">3</text>
<text transform="matrix(1 0 0 1.1 54.2 281.3)" font-size="8.6" fill="#52c652" text-anchor="middle" stroke="#52c652" stroke-width="0.3">4</text>
<text transform="matrix(1 0 0 1.1 40 272.6)" font-size="9" fill="#ff2626" text-anchor="middle" stroke="#ff2626" stroke-width="0.45">1</text>
<text transform="matrix(1 0 0 1.1 43.6 271.5)" font-size="9" fill="#ff2626" text-anchor="middle" stroke="#ff2626" stroke-width="0.45">1</text>
<text transform="matrix(1 0 0 1.1 47.8 271.1)" font-size="9" fill="#ff2626" text-anchor="middle" stroke="#ff2626" stroke-width="0.45">3</text>
<text transform="matrix(1 0 0 1.1 25.5 307.3)" font-size="9" fill="#ff2626" text-anchor="middle" stroke="#ff2626" stroke-width="0.45">11</text>
<text transform="matrix(1 0 0 1.1 21.4 317.6)" font-size="9" fill="#ff2626" text-anchor="middle" stroke="#ff2626" stroke-width="0.45">10</text>
<text transform="matrix(1 0 0 1.1 4.1 339.7)" font-size="9" fill="#ff2626" text-anchor="middle" stroke="#ff2626" stroke-width="0.45">7</text>
<text transform="matrix(1 0 0 1.1 8.3 334.9)" font-size="9" fill="#ff2626" text-anchor="middle" stroke="#ff2626" stroke-width="0.45">8</text>
<text transform="matrix(1 0 0 1.1 12.7 332.1)" font-size="9" fill="#ff2626" text-anchor="middle" stroke="#ff2626" stroke-width="0.45">9</text>
<text transform="matrix(1 0 0 1.1 244.6 246.6)" font-size="8.6" fill="#52c652" text-anchor="middle" stroke="#52c652" stroke-width="0.3">12</text>
<text transform="matrix(1 0 0 1.1 251 265.1)" font-size="8.6" fill="#52c652" text-anchor="middle" stroke="#52c652" stroke-width="0.3">3</text>
<text transform="matrix(1 0 0 1.1 254.3 296.5)" font-size="8.6" fill="#52c652" text-anchor="middle" stroke="#52c652" stroke-width="0.3">4</text>
<text transform="matrix(1 0 0 1.1 258 287.7)" font-size="8.6" fill="#52c652" text-anchor="middle" stroke="#52c652" stroke-width="0.3">5</text>
<text transform="matrix(1 0 0 1.1 262.8 282.8)" font-size="8.6" fill="#52c652" text-anchor="middle" stroke="#52c652" stroke-width="0.3">6</text>
<text transform="matrix(1 0 0 1.1 266.7 301.3)" font-size="8.6" fill="#52c652" text-anchor="middle" stroke="#52c652" stroke-width="0.3">7</text>
<text transform="matrix(1 0 0 1.1 275.2 295.7)" font-size="8.6" fill="#52c652" text-anchor="middle" stroke="#52c652" stroke-width="0.3">9</text>
<text transform="matrix(1 0 0 1.1 270.6 314.9)" font-size="8.6" fill="#52c652" text-anchor="middle" stroke="#52c652" stroke-width="0.3">8</text>
<text transform="matrix(1 0 0 1.1 283.3 196.1)" font-size="8.6" fill="#52c652" text-anchor="middle" stroke="#52c652" stroke-width="0.3">1</text>
<text transform="matrix(1 0 0 1.1 287 185.3)" font-size="8.6" fill="#52c652" text-anchor="middle" stroke="#52c652" stroke-width="0.3">2</text>
<text transform="matrix(1 0 0 1.1 291.4 192)" font-size="8.6" fill="#52c652" text-anchor="middle" stroke="#52c652" stroke-width="0.3">3</text>
<text transform="matrix(1 0 0 1.1 295.6 178.6)" font-size="8.6" fill="#52c652" text-anchor="middle" stroke="#52c652" stroke-width="0.3">4</text>
<text transform="matrix(1 0 0 1.1 299.9 160.7)" font-size="8.6" fill="#52c652" text-anchor="middle" stroke="#52c652" stroke-width="0.3">5</text>
<text transform="matrix(1 0 0 1.1 307.6 145.5)" font-size="8.6" fill="#52c652" text-anchor="middle" stroke="#52c652" stroke-width="0.3">678</text>
<text transform="matrix(1 0 0 1.1 315.9 138.1)" font-size="8.6" fill="#52c652" text-anchor="middle" stroke="#52c652" stroke-width="0.3">9</text>
<text transform="matrix(1 0 0 1.1 702.3 110.5)" font-size="8.6" fill="#9ccc50" text-anchor="middle" stroke="#9ccc50" stroke-width="0.3">1</text>
<text transform="matrix(1 0 0 1.1 705.9 96.5)" font-size="8.6" fill="#52c652" text-anchor="middle" stroke="#52c652" stroke-width="0.3">2</text>
<text transform="matrix(1 0 0 1.1 709.3 82.6)" font-size="8.6" fill="#52c652" text-anchor="middle" stroke="#52c652" stroke-width="0.3">3</text>
<path d="M51 271.8 H66" stroke="#e040e0" stroke-width="1.2" stroke-dasharray="2 1.5"/>
<path d="M43.5 258.5 H47.5 L45.5 261.5 Z" fill="#ff2626"/><rect x="44.8" y="256" width="1.5" height="2.7" fill="#ff2626"/>
<rect x="705.8" y="81.5" width="1.6" height="8" fill="#5a1a9a"/><rect x="709" y="87" width="1.5" height="1.5" fill="#1a1a8a"/>
<path d="M413 241 V248 H418" stroke="#3030c0" stroke-width="1.5" fill="none"/>
</g>
<text transform="matrix(1 0 0 1.2 845 39.2)" font-size="7.4" fill="#d8d8d8">1625.0000</text>
<text transform="matrix(1 0 0 1.2 845 60)" font-size="7.4" fill="#d8d8d8">1600.0000</text>
<text transform="matrix(1 0 0 1.2 845 80.7)" font-size="7.4" fill="#d8d8d8">1575.0000</text>
<text transform="matrix(1 0 0 1.2 845 101.5)" font-size="7.4" fill="#d8d8d8">1550.0000</text>
<text transform="matrix(1 0 0 1.2 845 122.2)" font-size="7.4" fill="#d8d8d8">1525.0000</text>
<text transform="matrix(1 0 0 1.2 845 143)" font-size="7.4" fill="#d8d8d8">1500.0000</text>
<text transform="matrix(1 0 0 1.2 845 163.8)" font-size="7.4" fill="#d8d8d8">1475.0000</text>
<text transform="matrix(1 0 0 1.2 845 184.5)" font-size="7.4" fill="#d8d8d8">1450.0000</text>
<text transform="matrix(1 0 0 1.2 845 205.3)" font-size="7.4" fill="#d8d8d8">1425.0000</text>
<text transform="matrix(1 0 0 1.2 845 226)" font-size="7.4" fill="#d8d8d8">1400.0000</text>
<text transform="matrix(1 0 0 1.2 845 246.8)" font-size="7.4" fill="#d8d8d8">1375.0000</text>
<text transform="matrix(1 0 0 1.2 845 267.6)" font-size="7.4" fill="#d8d8d8">1350.0000</text>
<text transform="matrix(1 0 0 1.2 845 288.3)" font-size="7.4" fill="#d8d8d8">1325.0000</text>
<text transform="matrix(1 0 0 1.2 845 309.1)" font-size="7.4" fill="#d8d8d8">1300.0000</text>
<text transform="matrix(1 0 0 1.2 845 329.8)" font-size="7.4" fill="#d8d8d8">1275.0000</text>
<text transform="matrix(1 0 0 1.2 845 350.6)" font-size="7.4" fill="#d8d8d8">1250.0000</text>
<text transform="matrix(1 0 0 1.2 845 371.4)" font-size="7.4" fill="#d8d8d8">1225.0000</text>
<text transform="matrix(1 0 0 1.2 845 392.1)" font-size="7.4" fill="#d8d8d8">1200.0000</text>
<text transform="matrix(1 0 0 1.2 845 412.9)" font-size="7.4" fill="#d8d8d8">1175.0000</text>
<text transform="matrix(1 0 0 1.2 845 433.6)" font-size="7.4" fill="#d8d8d8">1150.0000</text>
<text transform="matrix(1 0 0 1.2 845 454.4)" font-size="7.4" fill="#d8d8d8">1125.0000</text>
<text transform="matrix(1 0 0 1.2 845 475.2)" font-size="7.4" fill="#d8d8d8">1100.0000</text>
<text transform="matrix(1 0 0 1.2 845 495.9)" font-size="7.4" fill="#d8d8d8">1075.0000</text>
<text transform="matrix(1 0 0 1.2 845 516.7)" font-size="7.4" fill="#d8d8d8">1050.0000</text>
<path d="M842 74 L846.5 69.5 H883 V78.5 H846.5 Z" fill="#1aa01a"/>
<text transform="matrix(1 0 0 1.15 847 77)" font-size="7.4" fill="#fff">1578.7958</text>
<path d="M842 117.6 L846.5 113.1 H883 V122.1 H846.5 Z" fill="#1e8fff"/>
<text transform="matrix(1 0 0 1.15 847 120.6)" font-size="7.4" fill="#fff">1526.7371</text>
<path d="M842 159.8 L846.5 155.3 H883 V164.3 H846.5 Z" fill="#ff1010"/>
<text transform="matrix(1 0 0 1.15 847 162.8)" font-size="7.4" fill="#fff">1476.3400</text>
<path d="M842 455.4 L846.5 450.9 H883 V459.9 H846.5 Z" fill="#707070"/>
<text transform="matrix(1 0 0 1.15 847 458.4)" font-size="7.4" fill="#eee">1120.1281</text>
<path d="M842 246.8 L846.5 242.3 H883 V251.3 H846.5 Z" fill="#14a014"/>
<text transform="matrix(1 0 0 1.15 847 249.8)" font-size="7.4" fill="#fff">1370.8086</text>
<text transform="matrix(1 0 0 1.08 6.5 34.3)" font-size="8.3" fill="#000" stroke="#000" stroke-width="0.22">$BTK,NYSE ARCA BIOTECHNOLOGY INDEX, D, 09:30-16:00 (Dynamic)</text>
<text transform="matrix(1 0 0 1.08 6.5 44.7)" font-size="8.3" fill="#000" stroke="#000" stroke-width="0.22">Tradesight Seeker 1.4</text>
<text transform="matrix(1 0 0 1.08 6.5 55.2)" font-size="8.3" fill="#000" stroke="#000" stroke-width="0.22">Moving Average</text>
<text transform="matrix(1 0 0 1.08 6.5 65.6)" font-size="8.3" fill="#000" stroke="#000" stroke-width="0.22">Moving Average</text>
<text transform="matrix(1 0 0 1.08 6.5 76)" font-size="8.3" fill="#000" stroke="#000" stroke-width="0.22">Moving Average</text>
<text transform="matrix(1 0 0 1.08 6.5 86.5)" font-size="8.3" fill="#000" stroke="#000" stroke-width="0.22">MM Lines</text>
<text transform="matrix(1 0 0 1.05 529.5 30.8)" font-size="8.85" fill="#333">OverBought (Frame: 64)</text>
<text transform="matrix(1 0 0 1.05 529.5 255)" font-size="8.85" fill="#333">OverSold (Frame: 64)</text>
<rect x="248" y="35" width="326" height="12" fill="#6c6e72"/>
<rect x="248" y="35" width="326" height="1.5" fill="#0a0a50"/>
<text transform="matrix(1 0 0 1.15 251 44.5)" font-size="7.4" fill="#a9adb1" font-weight="bold">$BTK</text>
<text transform="matrix(1 0 0 1.15 279.5 44.5)" font-size="7.4" fill="#8d9195">O</text>
<text transform="matrix(1 0 0 1.15 292.5 44.5)" font-size="7.4" fill="#e4e4e4">1570.0840</text>
<text transform="matrix(1 0 0 1.15 337.5 44.5)" font-size="7.4" fill="#8d9195">Hi</text>
<text transform="matrix(1 0 0 1.15 351.3 44.5)" font-size="7.4" fill="#e4e4e4">1582.4987</text>
<text transform="matrix(1 0 0 1.15 396.4 44.5)" font-size="7.4" fill="#8d9195">Lo</text>
<text transform="matrix(1 0 0 1.15 411.8 44.5)" font-size="7.4" fill="#e4e4e4">1568.2773</text>
<text transform="matrix(1 0 0 1.15 457.5 44.5)" font-size="7.4" fill="#8d9195">Last</text>
<text transform="matrix(1 0 0 1.15 479.2 44.5)" font-size="7.4" fill="#e4e4e4">1578.7958</text>
<text transform="matrix(1 0 0 1.15 524.3 44.5)" font-size="7.4" fill="#8d9195">Chg</text>
<text transform="matrix(1 0 0 1.15 544.7 44.5)" font-size="7.4" fill="#3ad43a">10.9497</text>
<rect x="5" y="485" width="11" height="10" fill="#0a0a80"/>
<text transform="matrix(1 0 0 1.0 7.4 493.6)" font-size="9.5" fill="#fff">P</text>
<text transform="matrix(1 0 0 1.1 5.3 512.3)" font-size="6.45" fill="#606060">© eSignal, 2012</text>
<text transform="matrix(1 0 0 1.1 82.3 512.8)" font-size="9.1" fill="#8c8c8c">AutoFrame is OFF</text>
<g clip-path="url(#cc)">
<path d="M3 549.5 H841 M3 588.5 H841 M3 628.5 H841" stroke="#303030" stroke-width="1" stroke-dasharray="2.6 1.5" stroke-dashoffset="3.1" fill="none"/>
<path d="M3 569.5 H841 M3 608.5 H841" stroke="#a8a8a8" stroke-width="1" stroke-dasharray="2.6 1.5" stroke-dashoffset="3.1" fill="none"/>
<path d="M62.5 532 V636 M144.5 532 V636 M234.5 532 V636 M316.5 532 V636 M407 532 V636 M493 532 V636 M673 532 V636" stroke="#303030" stroke-width="1" stroke-dasharray="2.6 1.5" stroke-dashoffset="3.0" fill="none"/>
<path d="M579.3 532 V636" stroke="#a0a0a0" stroke-width="1" stroke-dasharray="2.6 1.5" fill="none"/>
<polyline points="2.7,548.5 10.8,556.7 21.7,567.5 32.5,574.3 42,563.4 47.4,568.9 58.2,564.8 65,556.7 73.1,556.7 81.3,566.1 92.1,577 96.2,571.6 102.9,578.3 108.3,577 113.8,590.5 121.9,600 132.7,606.8 139.5,614.4 144.9,604.1 149,606 155.7,620.3 163.9,606.8 169.3,597.3 173.3,600 178.8,589.2 181.5,593.2 185.5,578.3 193.7,567.5 197.7,577 203.1,581 209.9,571.6 216.7,555.3 219.4,563.4 223.5,544.5 231.6,549.9 234.9,558 239.5,558.8 243,571.6 246.8,570.2 254.4,602.7 262.5,596.8 267.9,608.1 271.2,608.1 275.5,598.6 279.3,605.4 284.2,570.2 288.2,564.8 293.7,568.9 301.8,560.2 304.5,559.4 314,567.5 320.7,567 328,578.9 332.9,570.2 341,575.6 349.2,570.2 361.4,574.3 369.5,623 373.6,600 382.5,609.5 390.3,595.1 395.2,598.6 402,613.5 406.6,629.3 418.2,605.4 422.3,606 427.2,601.4 431.8,608.7 436.4,600 439.9,601.4 448,574.3 456.2,568.3 459.7,569.7 464.3,585.1 468.4,570.2 471.7,580.5 480.5,567.3 484.1,587.2 492.9,555 496.7,556.1 504.6,571.7 508.4,573.1 517.2,595.2 522.2,589.3 529,570.2 534.8,561.4 537.8,560.8 541.6,565.8 546.6,579 553.9,612.8 558.3,604 566.2,574.6 574.4,608.4 582.7,623 589.1,609.8 595,602.5 599.4,604.8 608.2,599.6 611.1,601 615.5,596.6 619.9,587.2 624.3,589.3 630.2,590.8 636.6,595.2 640.5,584.9 644.3,582 648.4,564.3 653.1,555 657.2,556.1 661.9,562.9 665.4,575.5 668.9,576.1 672.7,553.2 677.1,564.3 681.5,548.2 687.4,558.5 693.9,573.1 699.1,565.8 706.5,553.2 713.8,548.8" fill="none" stroke="#2aa0f0" stroke-width="1"/>
</g>
<text transform="matrix(1 0 0 1.08 6.5 545.2)" font-size="8.55" fill="#111" stroke="#111" stroke-width="0.1">Commodity Channel Index</text>
<text transform="matrix(1 0 0 1.15 845 572)" font-size="7.4" fill="#d8d8d8">100.00</text>
<text transform="matrix(1 0 0 1.15 845 591.5)" font-size="7.4" fill="#d8d8d8">0.00</text>
<text transform="matrix(1 0 0 1.15 845 611.5)" font-size="7.4" fill="#d8d8d8">-100.00</text>
<text transform="matrix(1 0 0 1.15 845 631.5)" font-size="7.4" fill="#d8d8d8">-200.00</text>
<path d="M842 548.6 L846.5 544 H883 V553.2 H846.5 Z" fill="#1e8fff"/>
<text transform="matrix(1 0 0 1.15 847 551.6)" font-size="7.4" fill="#fff">201.33</text>
<rect x="3" y="516" width="880" height="1" fill="#505050"/>
<text transform="matrix(1 0 0 1.1 144.5 646.6)" font-size="8.1" fill="#d8d8d8" text-anchor="middle" font-weight="bold">Mar</text>
<text transform="matrix(1 0 0 1.1 234.7 646.6)" font-size="8.1" fill="#d8d8d8" text-anchor="middle" font-weight="bold">Apr</text>
<text transform="matrix(1 0 0 1.1 316.5 646.6)" font-size="8.1" fill="#d8d8d8" text-anchor="middle" font-weight="bold">May</text>
<text transform="matrix(1 0 0 1.1 407 646.6)" font-size="8.1" fill="#d8d8d8" text-anchor="middle" font-weight="bold">Jun</text>
<text transform="matrix(1 0 0 1.1 493.2 646.6)" font-size="8.1" fill="#d8d8d8" text-anchor="middle" font-weight="bold">Jul</text>
<text transform="matrix(1 0 0 1.1 672.6 646.6)" font-size="8.1" fill="#d8d8d8" text-anchor="middle" font-weight="bold">Sep</text>
<rect x="559" y="639.5" width="39.5" height="9.5" fill="#5c5c5c" stroke="#6e6e6e" stroke-width="1"/>
<text transform="matrix(1 0 0 1.15 579 646.8)" font-size="7.4" fill="#e8e8e8" text-anchor="middle">08/01/2012</text>
<text transform="matrix(1 0 0 1.1 4.5 646.6)" font-size="8.5" fill="#e0d0b0">Dy</text>
</svg>
<svg class="abs" style="left:0;top:0;" width="886" height="22" viewBox="0 0 886 22" font-family='"Liberation Sans", sans-serif'>
<rect x="4.5" y="6" width="3.5" height="9.5" fill="#12a844" stroke="#0a5a22" stroke-width="0.5"/>
<rect x="10.3" y="6.3" width="2.8" height="9" fill="#333" stroke="#777" stroke-width="0.8"/>
<text transform="matrix(1 0 0 1.12 18 14.6)" font-size="8.8" fill="#b9c2cc">Chart</text>
<rect x="45.5" y="8.5" width="9.5" height="6" rx="1.5" fill="#222" stroke="#c8c8c8" stroke-width="1"/>
<text transform="matrix(1 0 0 1 46.6 13.6)" font-size="4.8" fill="#e0e0e0" font-weight="bold">SBI</text>
<rect x="71.5" y="4.5" width="50" height="13.5" rx="2" fill="#141414" stroke="#3c3c3c" stroke-width="1"/>
<text transform="matrix(1 0 0 1.14 74 15.2)" font-size="8.6" fill="#c4c8d4">$BTK</text>
<path d="M114 10.2 H119 L116.5 13 Z" fill="#d0d0d0"/>
<rect x="123" y="4.5" width="16.5" height="13.5" rx="2" fill="#141414" stroke="#3c3c3c" stroke-width="1"/>
<circle cx="130.8" cy="11" r="4.3" fill="none" stroke="#dcdcdc" stroke-width="1.6" stroke-dasharray="2 0.7"/>
<circle cx="130.8" cy="11" r="1.5" fill="#dcdcdc"/>
<path d="M133.5 14.6 H137 L135.2 16.4 Z" fill="#fff"/>
<rect x="142.5" y="4.5" width="50.5" height="13.5" rx="2" fill="#141414" stroke="#3c3c3c" stroke-width="1"/>
<text transform="matrix(1 0 0 1.14 145.5 15.2)" font-size="8.6" fill="#c4c8d4">D</text>
<path d="M185.5 10.2 H190.5 L188 13 Z" fill="#d0d0d0"/>
<rect x="193.5" y="4.5" width="17" height="13.5" rx="2" fill="#141414" stroke="#3c3c3c" stroke-width="1"/>
<circle cx="202.3" cy="11" r="4.8" fill="none" stroke="#dcdcdc" stroke-width="1.4"/>
<path d="M202.3 7.8 V11.3 H204.5" fill="none" stroke="#dcdcdc" stroke-width="1.1"/>
<path d="M204 14.6 H207.5 L205.7 16.4 Z" fill="#fff"/>
<g fill="none" stroke="#d4d4d4" stroke-width="1.2">
<path d="M218.5 15.3 L219.3 12.5 L225.3 6.5 L227.3 8.5 L221.3 14.5 Z"/>
<circle cx="242.4" cy="11" r="4.8"/><path d="M239.8 12.6 L241.6 10.4 L243 11.5 L245 9"/>
<rect x="257.5" y="7.3" width="10.5" height="5.8" rx="1"/>
<circle cx="283.6" cy="11" r="4.8"/>
<circle cx="303.5" cy="11" r="4.8"/><path d="M301.7 13.6 L303.5 8.2 L305.3 13.6 M302.3 12 H304.7"/>
</g>
<text transform="matrix(1 0 0 1 258.6 12.3)" font-size="4.6" fill="#e8e8e8" font-weight="bold">SET</text>
<path d="M265 14.2 H268 L266.5 15.8 Z" fill="#fff"/>
<path d="M282.4 8.6 L285.6 11 L282.4 13.4 Z" fill="#d4d4d4"/>
<path d="M244.5 14.6 H247.5 L246 16.2 Z M305 14.6 H308 L306.5 16.2 Z" fill="#fff"/>
<path d="M319 11 L324 6 L329 11 L324 16 Z" fill="#1a1a1a" stroke="#d4d4d4" stroke-width="1.3"/>
<path d="M322 11.8 L324.5 9.3 M323 9 H325 V11" stroke="#e0e0e0" stroke-width="1" fill="none"/>
</svg>

<svg class="abs" style="left:820px;top:0;" width="66" height="14" viewBox="820 0 66 14">
<defs><linearGradient id="bg1" x1="0" y1="0" x2="0" y2="1"><stop offset="0" stop-color="#707070"/><stop offset="1" stop-color="#4e4e4e"/></linearGradient>
<linearGradient id="bg2" x1="0" y1="0" x2="0" y2="1"><stop offset="0" stop-color="#d8604a"/><stop offset="1" stop-color="#a8382a"/></linearGradient></defs>
<path d="M824.5 0 H881 V8 Q881 10.5 878.5 10.5 H827 Q824.5 10.5 824.5 8 Z" fill="url(#bg1)" stroke="#3a3a3a" stroke-width="0.8"/>
<path d="M866.5 0 H881 V8 Q881 10.5 878.5 10.5 H866.5 Z" fill="url(#bg2)" stroke="#5a2a20" stroke-width="0.6"/>
<path d="M838.8 0 V10.5 M852.8 0 V10.5 M866.5 0 V10.5" stroke="#383838" stroke-width="1"/>
<rect x="829.2" y="2.2" width="5.6" height="5" fill="none" stroke="#262626" stroke-width="1.2"/>
<path d="M833 6.2 H836 L834.5 8 Z" fill="#262626"/>
<rect x="843" y="6" width="6" height="1.6" fill="#262626"/>
<rect x="856.8" y="2.3" width="6" height="5" fill="none" stroke="#262626" stroke-width="1.2"/>
<path d="M871.5 2.5 L876 7.5 M876 2.5 L871.5 7.5" stroke="#2a1a18" stroke-width="1.7"/>
</svg>
<div class="abs" style="left:883px;top:12px;width:3px;height:640px;background:#3c3c3c;"></div>
<div class="abs" style="left:884px;top:14px;width:1px;height:636px;background:#585858;"></div>

<div class="abs" style="left:207px;top:517px;width:55px;height:15px;background:#ffffff;"></div>
<div class="tab" style="left:7.7px;color:#dfe3e7;">Vol</div>
<div class="tab" style="left:23px;top:514px;font-size:7.5px;color:#b8b8b8;">×</div>
<div class="abs" style="left:30.7px;top:517px;width:1px;height:15px;background:#3a3a3a;"></div>
<div class="tab" style="left:35.5px;color:#dfe3e7;">RSI (14, C)</div>
<div class="tab" style="left:76.7px;top:514px;font-size:7.5px;color:#b8b8b8;">×</div>
<div class="abs" style="left:84.5px;top:517px;width:1px;height:15px;background:#3a3a3a;"></div>
<div class="tab" style="left:89.8px;color:#dfe3e7;">MACD (12, 26, C, 9, false, true)</div>
<div class="tab" style="left:200.2px;top:514px;font-size:7.5px;color:#b8b8b8;">×</div>
<div class="abs" style="left:207.2px;top:517px;width:1px;height:15px;background:#3a3a3a;"></div>
<div class="tab" style="left:213px;color:#a8a8a8;">CCI (20, C)</div>
<div class="tab" style="left:253px;top:514px;font-size:7.5px;color:#666;">×</div>
<div class="abs" style="left:261.7px;top:517px;width:1px;height:15px;background:#3a3a3a;"></div>
<div class="tab" style="left:266.7px;color:#dfe3e7;">MoneyFlow (14)</div>
<div class="tab" style="left:327.2px;top:514px;font-size:7.5px;color:#b8b8b8;">×</div>
<div class="abs" style="left:333.8px;top:517px;width:1px;height:15px;background:#3a3a3a;"></div>
<div class="dw">
<div style="left:3px;top:2.3px;">Date</div>
<div style="right:3px;top:2.3px;">08/01/2012</div>
<div style="left:3px;top:12px;">Price</div>
<div style="right:3px;top:12px;">1120.1281</div>
<div style="left:3px;top:34px;">Open</div>
<div style="right:3px;top:34px;">1466.1690</div>
<div style="left:3px;top:44px;">High</div>
<div style="right:3px;top:44px;">1473.3950</div>
<div style="left:3px;top:54px;">Low</div>
<div style="right:3px;top:54px;">1435.9116</div>
<div style="left:3px;top:64px;">Close</div>
<div style="right:3px;top:64px;">1437.1038</div>
<div style="left:3px;top:73.7px;">Bar #</div>
<div style="right:3px;top:73.7px;">267/300</div>
<div style="left:3px;top:83.5px;">Bar Index</div>
<div style="right:3px;top:83.5px;">-33</div>
<div style="left:0;width:120px;text-align:center;top:23px;font-weight:bold;">$BTK, D</div>
<div style="left:20px;top:96px;font-weight:bold;color:#e0e8f0;font-size:8.2px;">Tradesight Seeker 1.4</div>
</div>
</body></html>
